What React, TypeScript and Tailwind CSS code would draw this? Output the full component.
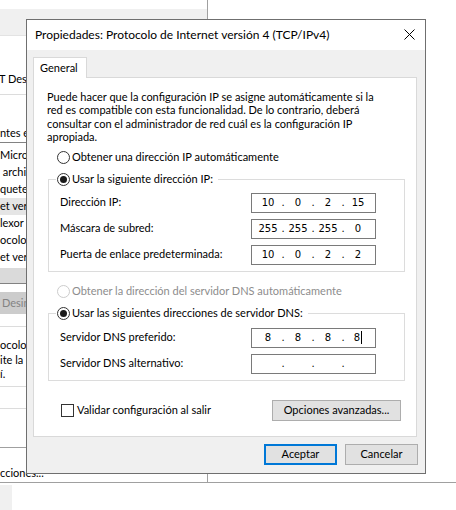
import React from "react";
import clsx from "clsx";

const Radio = ({ checked, disabled }: { checked?: boolean; disabled?: boolean }) => (
  <span
    className={clsx(
      "flex h-[13px] w-[13px] shrink-0 items-center justify-center rounded-full border bg-white",
      disabled ? "border-[#cccccc]" : "border-[#333333]"
    )}
  >
    {checked && <span className="h-[7px] w-[7px] rounded-full bg-[#1a1a1a]" />}
  </span>
);

const IpBox = ({ parts, caret }: { parts: string[]; caret?: boolean }) => (
  <div className="flex h-[20px] w-[125px] items-center border border-[#7a7a7a] bg-white pl-[3px] font-['DejaVu_Sans',sans-serif] text-[10px] text-black">
    {parts.map((p, i) => (
      <React.Fragment key={i}>
        {i > 0 && <span className="w-[4px] text-center">.</span>}
        <span className="flex w-[26px] items-center justify-center">
          {p}
          {caret && i === 3 && <span className="ml-px h-[13px] w-px bg-black" />}
        </span>
      </React.Fragment>
    ))}
  </div>
);

const Row = ({ label, parts, caret }: { label: string; parts: string[]; caret?: boolean }) => (
  <div className="grid grid-cols-[191px_125px] items-center">
    <span>{label}</span>
    <IpBox parts={parts} caret={caret} />
  </div>
);

// only the left strip of the window behind the dialog is visible
const listItems = ["Micros", " archiv", "quete", "et ver", "lexor d", "ocolo", "et ver"];

const BackgroundWindow = () => (
  <div className="flex h-[482px] w-[208px] flex-col border-r border-[#a0a0a0] bg-white text-black">
    <div className="h-[9px]" />
    <div className="h-[27px] border-b border-[#e3e3e3] bg-[#f0f0f0]" />
    <div className="flex h-[59px] items-end whitespace-nowrap border-b border-[#dcdcdc] pb-[7px]">
      <span className="-ml-px w-[27px] overflow-hidden">T Des</span>
    </div>
    <div className="flex h-[47px] items-end whitespace-nowrap pb-px">
      <span className="w-[27px] overflow-hidden">ntes e</span>
    </div>
    <div className="flex h-[142px] flex-col border-y border-[#828282] pt-[4px]">
      {listItems.map((t, i) => (
        <div
          key={i}
          className={clsx("flex h-[17px] items-center whitespace-pre", i === 3 && "bg-[#e5e5e5]")}
        >
          <span className="w-[27px] overflow-hidden">{t}</span>
        </div>
      ))}
      <div className="mt-auto h-[15px] bg-[#dadada]" />
    </div>
    <div className="mt-[8px] flex h-[22px] items-center bg-[#cccccc] pl-[2px] text-[#838383]">
      <span className="w-[25px] overflow-hidden">Desin</span>
    </div>
    <div className="mt-[12px] flex h-[60px] flex-col border-t border-[#dcdcdc] pt-[11px] leading-[14.5px]">
      <span className="w-[27px] overflow-hidden whitespace-nowrap">ocolo</span>
      <span className="w-[27px] overflow-hidden whitespace-nowrap">ite la c</span>
      <span className="w-[27px] overflow-hidden whitespace-nowrap">í.</span>
    </div>
    <div className="h-[22px] border-t border-[#dcdcdc]" />
    <div className="h-[39px] border-t border-[#dcdcdc]" />
    <div className="flex flex-1 items-end whitespace-nowrap border-t border-[#a0a0a0] pb-px">
      cciones...
    </div>
  </div>
);

const App = () => {
  return (
    <div className="relative flex h-[510px] w-[456px] flex-col overflow-hidden bg-white font-['Segoe_UI','Lato',sans-serif] text-[11px] text-black">
      <div className="flex h-[482px]">
        <BackgroundWindow />
      </div>
      <div className="flex flex-1 border-t border-[#a0a0a0] pt-[2px]">
        <div className="w-[12px] bg-[#f0f0f0]" />
      </div>

      {/* dialog window */}
      <div className="absolute left-[26px] top-[19px] flex h-[455px] w-[400px] flex-col border border-[#6f6f6f] bg-[#f0f0f0]">
        <div className="flex h-[30px] shrink-0 items-center justify-between bg-white pl-[8px] pr-[10px]">
          <span className="text-[12px]">Propiedades: Protocolo de Internet versión 4 (TCP/IPv4)</span>
          <svg width="11" height="11" viewBox="0 0 11 11" className="-mt-[2px]">
            <path d="M0.5 0.5L10.5 10.5M10.5 0.5L0.5 10.5" stroke="#000" strokeWidth="1" />
          </svg>
        </div>

        <div className="flex flex-col pl-[6px] pr-[7px] pt-[7px]">
          <div className="relative z-10 -mb-px flex h-[21px] w-[54px] items-center border-x border-t border-[#d9d9d9] bg-white pl-[6px]">
            General
          </div>
          <div className="flex h-[360px] w-[384px] flex-col border border-[#d9d9d9] bg-white pl-[13px] pr-[15px] pt-[12px]">
            <p className="leading-[13.4px]">
              Puede hacer que la configuración IP se asigne automáticamente si la
              <br />
              red es compatible con esta funcionalidad. De lo contrario, deberá
              <br />
              consultar con el administrador de red cuál es la configuración IP
              <br />
              apropiada.
            </p>

            <label className="ml-[10px] mt-[7px] flex h-[14px] items-center gap-[2px]">
              <Radio />
              <span>Obtener una dirección IP automáticamente</span>
            </label>

            <fieldset className="ml-px mt-[8px] w-[357px] border border-[#dcdcdc] px-[11px] pb-[6px] pt-[6px]">
              <legend className="-ml-[4px] flex h-[14px] items-center gap-[2px] pl-px pr-[5px]">
                <Radio checked />
                <span>Usar la siguiente dirección IP:</span>
              </legend>
              <div className="flex flex-col gap-[6px]">
                <Row label="Dirección IP:" parts={["10", "0", "2", "15"]} />
                <Row label="Máscara de subred:" parts={["255", "255", "255", "0"]} />
                <Row label="Puerta de enlace predeterminada:" parts={["10", "0", "2", "2"]} />
              </div>
            </fieldset>

            <label className="ml-[10px] mt-[13px] flex h-[14px] items-center gap-[2px] text-[#8d8d8d]">
              <Radio disabled />
              <span>Obtener la dirección del servidor DNS automáticamente</span>
            </label>

            <fieldset className="ml-px mt-[8px] w-[357px] border border-[#dcdcdc] px-[11px] pb-[6px] pt-[7px]">
              <legend className="-ml-[4px] flex h-[14px] items-center gap-[2px] pl-px pr-[5px]">
                <Radio checked />
                <span>Usar las siguientes direcciones de servidor DNS:</span>
              </legend>
              <div className="flex flex-col gap-[6px]">
                <Row label="Servidor DNS preferido:" parts={["8", "8", "8", "8"]} caret />
                <Row label="Servidor DNS alternativo:" parts={["", "", "", ""]} />
              </div>
            </fieldset>

            <div className="mt-[19px] flex h-[21px] items-center justify-between">
              <label className="ml-[14px] flex items-center gap-[3px]">
                <span className="h-[13px] w-[13px] border border-[#333333] bg-white" />
                <span>Validar configuración al salir</span>
              </label>
              <button className="h-[21px] w-[129px] border border-[#adadad] bg-[#e1e1e1]">
                Opciones avanzadas...
              </button>
            </div>
          </div>

          <div className="mt-[7px] flex justify-end gap-[8px]">
            <button className="h-[21px] w-[73px] border-2 border-[#0078d7] bg-[#e1e1e1]">
              Aceptar
            </button>
            <button className="h-[21px] w-[73px] border border-[#adadad] bg-[#e1e1e1]">
              Cancelar
            </button>
          </div>
        </div>
      </div>
    </div>
  );
};

export default App;
